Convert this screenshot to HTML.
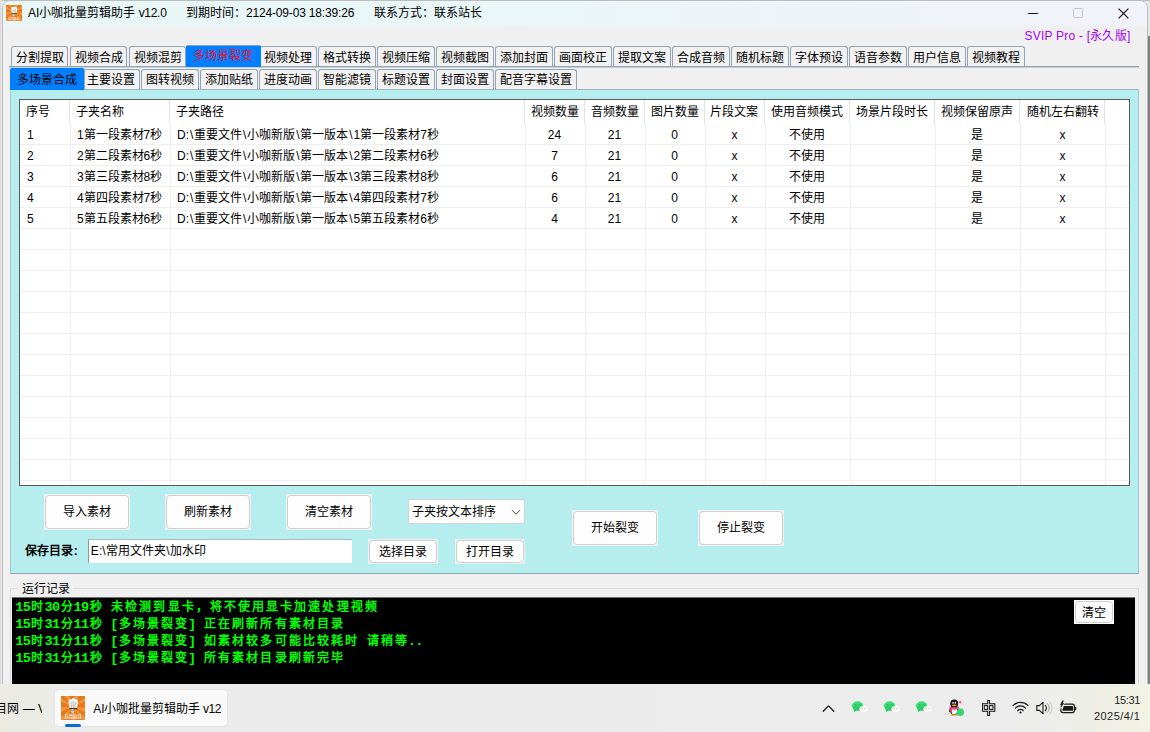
<!DOCTYPE html>
<html lang="zh-CN"><head><meta charset="utf-8"><title>AI小咖批量剪辑助手 v12.0</title>
<style>
*{box-sizing:border-box;margin:0;padding:0}
html,body{width:1150px;height:732px;overflow:hidden}
body{position:relative;background:#f0f0f0;font-family:"Liberation Sans",sans-serif;font-size:12px;color:#000;line-height:1}
.a{position:absolute;white-space:nowrap}
.t{position:absolute;white-space:nowrap;line-height:16px;height:16px}
.c{text-align:center}
.j{display:inline-block;text-align-last:justify;white-space:nowrap}
u{text-decoration:none;margin:0 0.9px}
#win{left:2px;top:0.4px;width:1146px;height:700px;border:1px solid #bdbdbd;border-radius:8px 8px 0 0;background:#f0f0f0;overflow:hidden}
#tb{left:0;top:0;width:1150px;height:25.3px;background:linear-gradient(90deg,#e8f6f6 0%,#eaf6f8 45%,#eef3f9 70%,#f0f3fa 100%)}
.tab{position:absolute;height:21px;border:1px solid #93a4b5;border-bottom:none;border-radius:3px 3px 0 0;background:#f2f2f2;text-align:center;line-height:22px;white-space:nowrap;overflow:hidden}
.tab.sel{background:#0080ff;border-color:#0080ff;border-radius:2px 2px 0 0}
.hl{position:absolute;height:1px;background:#93a4b5}
.vl{position:absolute;width:1px;background:#93a4b5}
#lv{left:19px;top:99px;width:1111px;height:387px;background:#fff;border:1px solid #5a5a5a;overflow:hidden}
.gh{position:absolute;left:0;width:1111px;height:1px;background:#efefef}
.gv{position:absolute;width:1px;background:#efefef;top:24px;height:363px}
.hs{position:absolute;width:1px;background:#e3e3e3;top:0;height:24px}
.btn{position:absolute;background:#eef1f1}
.btn>b{position:absolute;left:1px;top:1px;right:1px;bottom:1px;border:1px solid #d0d0d0;border-radius:4px;background:#fdfdfd;font-weight:normal;text-align:center;white-space:nowrap;display:block}
.con{position:absolute;left:16.4px;white-space:nowrap;color:#00ff00;font-weight:bold;font-size:12px;letter-spacing:2.08px;line-height:17px;height:17px;font-family:"Liberation Sans",sans-serif}
.con i{position:relative;left:-1.1px;font-style:normal;font-size:13.6px;letter-spacing:-0.65px;font-family:"Liberation Mono",monospace}
</style></head><body>
<div class="a" style="left:1147px;top:0;width:3px;height:36px;background:#e6e6e6"></div>
<div class="a" style="left:1148px;top:36px;width:2px;height:648px;background:#808080"></div>
<div class="a" style="left:0;top:0;width:1150px;height:1px;background:#bcbcbc"></div>
<div class="a" style="left:0;top:0;width:2.4px;height:684px;background:linear-gradient(90deg,#dadada,#e9e9e9)"></div>
<div id="win" class="a"></div>
<div class="a" style="left:3px;top:1.4px;width:1144px;height:24.4px;border-radius:7px 7px 0 0;overflow:hidden"><div id="tb" class="a"></div></div>
<svg class="a" style="left:6px;top:5px" width="16" height="16" viewBox="0 0 24 24"><rect width="24" height="24" fill="#e8791b"/>
<g fill="#f19b47" opacity="0.85"><path d="M12 11L0 1.5V5.5z"/><path d="M12 11L3.5 0H8z"/><path d="M12 11L13.5 0H18z"/><path d="M12 11L24 1.5V5.5z"/><path d="M12 11L24 11.5V16z"/><path d="M12 11L24 21V24H21z"/><path d="M12 11L10 24H14.5z"/><path d="M12 11L0 21V24H3z"/><path d="M12 11L0 11V15.5z"/></g>
<path d="M7.7 6.9C6.9 4.2 9 2.5 10.7 3.4C11.5 1.7 13.7 1.7 14.3 3.2C16.1 2.3 17.6 4.4 16.7 6.9L15.9 12.4H8.7z" fill="#fff"/>
<path d="M10 5.6L10.3 12M12.1 5L12.2 12M14.3 5.6L14 12" stroke="#8e8e8e" stroke-width="0.7" fill="none"/>
<rect x="8.4" y="12.2" width="7.8" height="1" fill="#1d1d1d"/>
<ellipse cx="11.7" cy="15" rx="1.9" ry="1.9" fill="#cdd2d6"/><path d="M10.6 14.4h0.9M12.3 14.4h0.9" stroke="#555" stroke-width="0.6"/>
<g fill="#fff" opacity="0.85"><rect x="4" y="18.4" width="3.3" height="4.6"/><rect x="8.2" y="18.4" width="3.3" height="4.6"/><rect x="12.4" y="18.4" width="3.3" height="4.6"/><rect x="16.6" y="18.4" width="3.3" height="4.6"/></g>
<path d="M4 20h3.3M5.6 18.4v4.6M8.2 20.6h3.3M9.8 19.4v3.6M12.4 19.8h3.3M14 20.8v2.2M16.6 20.2h3.3M18.2 18.4v4.6" stroke="#e8791b" stroke-width="0.7" fill="none"/></svg>
<div class="t" style="left:28px;top:5px"><span class="j" style="width:138.53px">AI小咖批量剪辑助手 <span style="letter-spacing:-0.3px">v12.0</span></span></div>
<div class="t" style="left:186px;top:5px"><span class="j" style="width:168.2px">到期时间：<span style="letter-spacing:-0.17px">2124-09-03 18:39:26</span></span></div>
<div class="t" style="left:374.4px;top:5px;letter-spacing:-0.1px"><span class="j" style="width:107.11px">联系方式：联系站长</span></div>
<div class="a" style="left:1028px;top:12.6px;width:10.3px;height:1.2px;background:#111"></div>
<div class="a" style="left:1073px;top:8px;width:10px;height:10px;border:1px solid #c3c7cc;border-radius:1.5px"></div>
<svg class="a" style="left:1118.3px;top:7.6px" width="11" height="11" viewBox="0 0 11 11"><path d="M0.6 0.6L10.4 10.4M10.4 0.6L0.6 10.4" stroke="#111" stroke-width="1.15" fill="none"/></svg>
<div class="t" style="left:1024.5px;top:27.5px;color:#a400ff;letter-spacing:0.22px"><span class="j" style="width:106px">SVIP Pro - [永久版]</span></div>
<div class="tab" style="left:10.9px;top:46px;width:57.5px"><span class="j" style="width:48px">分割提取</span></div>
<div class="tab" style="left:69.9px;top:46px;width:57.5px"><span class="j" style="width:48px">视频合成</span></div>
<div class="tab" style="left:128.9px;top:46px;width:57.5px"><span class="j" style="width:48px">视频混剪</span></div>
<div class="tab sel" style="left:185.7px;top:44.5px;width:75.4px;height:22.7px;line-height:21.6px;color:#e0143c;border-color:#86a0ba #0080ff #0080ff;z-index:3"><span class="j" style="width:60px">多场景裂变</span></div>
<div class="tab" style="left:259.2px;top:46px;width:57.5px"><span class="j" style="width:48px">视频处理</span></div>
<div class="tab" style="left:318.2px;top:46px;width:57.5px"><span class="j" style="width:48px">格式转换</span></div>
<div class="tab" style="left:377.2px;top:46px;width:57.5px"><span class="j" style="width:48px">视频压缩</span></div>
<div class="tab" style="left:436.2px;top:46px;width:57.5px"><span class="j" style="width:48px">视频截图</span></div>
<div class="tab" style="left:495.2px;top:46px;width:57.5px"><span class="j" style="width:48px">添加封面</span></div>
<div class="tab" style="left:554.2px;top:46px;width:57.5px"><span class="j" style="width:48px">画面校正</span></div>
<div class="tab" style="left:613.2px;top:46px;width:57.5px"><span class="j" style="width:48px">提取文案</span></div>
<div class="tab" style="left:672.2px;top:46px;width:57.5px"><span class="j" style="width:48px">合成音频</span></div>
<div class="tab" style="left:731.2px;top:46px;width:57.5px"><span class="j" style="width:48px">随机标题</span></div>
<div class="tab" style="left:790.2px;top:46px;width:57.5px"><span class="j" style="width:48px">字体预设</span></div>
<div class="tab" style="left:849.2px;top:46px;width:57.5px"><span class="j" style="width:48px">语音参数</span></div>
<div class="tab" style="left:908.2px;top:46px;width:57.5px"><span class="j" style="width:48px">用户信息</span></div>
<div class="tab" style="left:967.2px;top:46px;width:57.5px"><span class="j" style="width:48px">视频教程</span></div>
<div class="hl" style="left:9.2px;top:66px;width:1129.8px"></div>
<div class="hl" style="left:9.2px;top:67px;width:1129.8px;background:#c6ced6"></div>
<div class="tab sel" style="left:9.9px;top:67.8px;width:74.1px;height:22.5px;line-height:22px;z-index:3"><span class="j" style="width:60px">多场景合成</span></div>
<div class="tab" style="left:82.2px;top:69.2px;width:57.5px;line-height:20.5px"><span class="j" style="width:48px">主要设置</span></div>
<div class="tab" style="left:141.2px;top:69.2px;width:57.5px;line-height:20.5px"><span class="j" style="width:48px">图转视频</span></div>
<div class="tab" style="left:200.2px;top:69.2px;width:57.5px;line-height:20.5px"><span class="j" style="width:48px">添加贴纸</span></div>
<div class="tab" style="left:259.2px;top:69.2px;width:57.5px;line-height:20.5px"><span class="j" style="width:48px">进度动画</span></div>
<div class="tab" style="left:318.2px;top:69.2px;width:57.5px;line-height:20.5px"><span class="j" style="width:48px">智能滤镜</span></div>
<div class="tab" style="left:377.2px;top:69.2px;width:57.5px;line-height:20.5px"><span class="j" style="width:48px">标题设置</span></div>
<div class="tab" style="left:436.2px;top:69.2px;width:57.5px;line-height:20.5px"><span class="j" style="width:48px">封面设置</span></div>
<div class="tab" style="left:495.2px;top:69.2px;width:81.5px;line-height:20.5px"><span class="j" style="width:72px">配音字幕设置</span></div>
<div class="vl" style="left:84.2px;top:70px;height:19.5px;z-index:4"></div>
<div class="a" style="left:9.6px;top:89.3px;width:1129.2px;height:484.3px;background:#b6eeef;border:1px solid #93a4b5;border-left-color:#a3c6cd;border-right-color:#a3c6cd;border-top-color:#9fb3c0"></div>
<div id="lv" class="a">
<div class="gh" style="top:44.3px"></div>
<div class="gh" style="top:65.27px"></div>
<div class="gh" style="top:86.24px"></div>
<div class="gh" style="top:107.21px"></div>
<div class="gh" style="top:128.18px"></div>
<div class="gh" style="top:149.15px"></div>
<div class="gh" style="top:170.12px"></div>
<div class="gh" style="top:191.09px"></div>
<div class="gh" style="top:212.06px"></div>
<div class="gh" style="top:233.03px"></div>
<div class="gh" style="top:254px"></div>
<div class="gh" style="top:274.97px"></div>
<div class="gh" style="top:295.94px"></div>
<div class="gh" style="top:316.91px"></div>
<div class="gh" style="top:337.88px"></div>
<div class="gh" style="top:358.85px"></div>
<div class="gh" style="top:379.82px"></div>
<div class="hs" style="left:49px"></div>
<div class="gv" style="left:50px"></div>
<div class="hs" style="left:149px"></div>
<div class="gv" style="left:150px"></div>
<div class="hs" style="left:504px"></div>
<div class="gv" style="left:505px"></div>
<div class="hs" style="left:564px"></div>
<div class="gv" style="left:565px"></div>
<div class="hs" style="left:624px"></div>
<div class="gv" style="left:625px"></div>
<div class="hs" style="left:684px"></div>
<div class="gv" style="left:685px"></div>
<div class="hs" style="left:744px"></div>
<div class="gv" style="left:745px"></div>
<div class="hs" style="left:829px"></div>
<div class="gv" style="left:830px"></div>
<div class="hs" style="left:914px"></div>
<div class="gv" style="left:915px"></div>
<div class="hs" style="left:999px"></div>
<div class="gv" style="left:1000px"></div>
<div class="hs" style="left:1084px"></div>
<div class="gv" style="left:1085px"></div>
<div class="t" style="left:5.8px;top:4.1px"><span class="j" style="width:24px">序号</span></div>
<div class="t" style="left:56px;top:4.1px"><span class="j" style="width:48px">子夹名称</span></div>
<div class="t" style="left:156px;top:4.1px"><span class="j" style="width:48px">子夹路径</span></div>
<div class="t c" style="left:504.5px;top:4.1px;width:60px"><span class="j" style="width:48px">视频数量</span></div>
<div class="t c" style="left:564.5px;top:4.1px;width:60px"><span class="j" style="width:48px">音频数量</span></div>
<div class="t c" style="left:624.5px;top:4.1px;width:60px"><span class="j" style="width:48px">图片数量</span></div>
<div class="t c" style="left:684.5px;top:4.1px;width:59.9px"><span class="j" style="width:48px">片段文案</span></div>
<div class="t c" style="left:744.4px;top:4.1px;width:85.2px"><span class="j" style="width:72px">使用音频模式</span></div>
<div class="t c" style="left:829.6px;top:4.1px;width:85.2px"><span class="j" style="width:72px">场景片段时长</span></div>
<div class="t c" style="left:914.8px;top:4.1px;width:85.2px"><span class="j" style="width:72px">视频保留原声</span></div>
<div class="t c" style="left:1000px;top:4.1px;width:85px"><span class="j" style="width:72px">随机左右翻转</span></div>
<div class="t" style="left:7px;top:26.9px">1</div>
<div class="t" style="left:56.9px;top:26.9px"><span class="j" style="width:85.36px">1第一段素材7秒</span></div>
<div class="t" style="left:157px;top:26.9px"><span class="j" style="width:261.86px">D:<u>\</u>重要文件<u>\</u>小咖新版<u>\</u>第一版本<u>\</u>1第一段素材7秒</span></div>
<div class="t c" style="left:504.5px;top:26.9px;width:60px">24</div>
<div class="t c" style="left:564.5px;top:26.9px;width:60px">21</div>
<div class="t c" style="left:624.5px;top:26.9px;width:60px">0</div>
<div class="t c" style="left:684.5px;top:26.9px;width:59.9px">x</div>
<div class="t c" style="left:744.4px;top:26.9px;width:85.2px"><span class="j" style="width:36px">不使用</span></div>
<div class="t c" style="left:914.8px;top:26.9px;width:85.2px">是</div>
<div class="t c" style="left:1000px;top:26.9px;width:85px">x</div>
<div class="t" style="left:7px;top:47.88px">2</div>
<div class="t" style="left:56.9px;top:47.88px"><span class="j" style="width:85.36px">2第二段素材6秒</span></div>
<div class="t" style="left:157px;top:47.88px"><span class="j" style="width:261.86px">D:<u>\</u>重要文件<u>\</u>小咖新版<u>\</u>第一版本<u>\</u>2第二段素材6秒</span></div>
<div class="t c" style="left:504.5px;top:47.88px;width:60px">7</div>
<div class="t c" style="left:564.5px;top:47.88px;width:60px">21</div>
<div class="t c" style="left:624.5px;top:47.88px;width:60px">0</div>
<div class="t c" style="left:684.5px;top:47.88px;width:59.9px">x</div>
<div class="t c" style="left:744.4px;top:47.88px;width:85.2px"><span class="j" style="width:36px">不使用</span></div>
<div class="t c" style="left:914.8px;top:47.88px;width:85.2px">是</div>
<div class="t c" style="left:1000px;top:47.88px;width:85px">x</div>
<div class="t" style="left:7px;top:68.86px">3</div>
<div class="t" style="left:56.9px;top:68.86px"><span class="j" style="width:85.36px">3第三段素材8秒</span></div>
<div class="t" style="left:157px;top:68.86px"><span class="j" style="width:261.86px">D:<u>\</u>重要文件<u>\</u>小咖新版<u>\</u>第一版本<u>\</u>3第三段素材8秒</span></div>
<div class="t c" style="left:504.5px;top:68.86px;width:60px">6</div>
<div class="t c" style="left:564.5px;top:68.86px;width:60px">21</div>
<div class="t c" style="left:624.5px;top:68.86px;width:60px">0</div>
<div class="t c" style="left:684.5px;top:68.86px;width:59.9px">x</div>
<div class="t c" style="left:744.4px;top:68.86px;width:85.2px"><span class="j" style="width:36px">不使用</span></div>
<div class="t c" style="left:914.8px;top:68.86px;width:85.2px">是</div>
<div class="t c" style="left:1000px;top:68.86px;width:85px">x</div>
<div class="t" style="left:7px;top:89.84px">4</div>
<div class="t" style="left:56.9px;top:89.84px"><span class="j" style="width:85.36px">4第四段素材7秒</span></div>
<div class="t" style="left:157px;top:89.84px"><span class="j" style="width:261.86px">D:<u>\</u>重要文件<u>\</u>小咖新版<u>\</u>第一版本<u>\</u>4第四段素材7秒</span></div>
<div class="t c" style="left:504.5px;top:89.84px;width:60px">6</div>
<div class="t c" style="left:564.5px;top:89.84px;width:60px">21</div>
<div class="t c" style="left:624.5px;top:89.84px;width:60px">0</div>
<div class="t c" style="left:684.5px;top:89.84px;width:59.9px">x</div>
<div class="t c" style="left:744.4px;top:89.84px;width:85.2px"><span class="j" style="width:36px">不使用</span></div>
<div class="t c" style="left:914.8px;top:89.84px;width:85.2px">是</div>
<div class="t c" style="left:1000px;top:89.84px;width:85px">x</div>
<div class="t" style="left:7px;top:110.82px">5</div>
<div class="t" style="left:56.9px;top:110.82px"><span class="j" style="width:85.36px">5第五段素材6秒</span></div>
<div class="t" style="left:157px;top:110.82px"><span class="j" style="width:261.86px">D:<u>\</u>重要文件<u>\</u>小咖新版<u>\</u>第一版本<u>\</u>5第五段素材6秒</span></div>
<div class="t c" style="left:504.5px;top:110.82px;width:60px">4</div>
<div class="t c" style="left:564.5px;top:110.82px;width:60px">21</div>
<div class="t c" style="left:624.5px;top:110.82px;width:60px">0</div>
<div class="t c" style="left:684.5px;top:110.82px;width:59.9px">x</div>
<div class="t c" style="left:744.4px;top:110.82px;width:85.2px"><span class="j" style="width:36px">不使用</span></div>
<div class="t c" style="left:914.8px;top:110.82px;width:85.2px">是</div>
<div class="t c" style="left:1000px;top:110.82px;width:85px">x</div>
</div>
<div class="btn" style="left:44px;top:494px;width:86px;height:36px"><b style="line-height:32px"><span class="j" style="width:48px">导入素材</span></b></div>
<div class="btn" style="left:165px;top:494px;width:86px;height:36px"><b style="line-height:32px"><span class="j" style="width:48px">刷新素材</span></b></div>
<div class="btn" style="left:286px;top:494px;width:86px;height:36px"><b style="line-height:32px"><span class="j" style="width:48px">清空素材</span></b></div>
<div class="btn" style="left:572px;top:509.8px;width:86px;height:36px"><b style="line-height:32px"><span class="j" style="width:48px">开始裂变</span></b></div>
<div class="btn" style="left:698px;top:509.8px;width:86px;height:36px"><b style="line-height:32px"><span class="j" style="width:48px">停止裂变</span></b></div>
<div class="btn" style="left:367.8px;top:538.8px;width:70px;height:25px"><b style="line-height:23.4px"><span class="j" style="width:48px">选择目录</span></b></div>
<div class="btn" style="left:454.8px;top:538.8px;width:70px;height:25px"><b style="line-height:23.4px"><span class="j" style="width:48px">打开目录</span></b></div>
<div class="a" style="left:408.2px;top:499px;width:116.5px;height:24.7px;background:#fff;border:1px solid #d2d2d2;border-radius:2px"></div>
<div class="t" style="left:412px;top:503.5px"><span class="j" style="width:84px">子夹按文本排序</span></div>
<svg class="a" style="left:510.8px;top:508.5px" width="10" height="7" viewBox="0 0 10 7"><path d="M1 1.2L5 5.2L9 1.2" stroke="#444" stroke-width="1" fill="none"/></svg>
<div class="t" style="left:24.7px;top:543.2px;font-weight:bold;letter-spacing:0.25px"><span class="j" style="width:53.25px">保存目录:</span></div>
<div class="a" style="left:88.2px;top:539.3px;width:264px;height:23.3px;background:#fff;border-left:1px solid #8b9aa0;border-top:1px solid #a9bcc0"></div>
<div class="t" style="left:90.8px;top:543px;letter-spacing:0.1px"><span class="j" style="width:115.22px">E:\常用文件夹\加水印</span></div>
<div class="a" style="left:9.6px;top:588.2px;width:1129.2px;height:100px;border:1px solid #dcdcdc;border-bottom:none"></div>
<div class="t" style="left:19px;top:581.3px;background:#f0f0f0;padding:0 3px"><span class="j" style="width:48px">运行记录</span></div>
<div class="a" style="left:12.4px;top:597px;width:1122.7px;height:90px;background:#000;border-top:1px solid #6f6f6f"></div>
<div class="con" style="top:598.8px"><span class="j" style="width:362.38px"><i>15</i>时<i>30</i>分<i>19</i>秒<i> </i>未检测到显卡，将不使用显卡加速处理视频</span></div>
<div class="con" style="top:615.8px"><span class="j" style="width:328.58px"><i>15</i>时<i>31</i>分<i>11</i>秒<i> [</i>多场景裂变<i>] </i>正在刷新所有素材目录</span></div>
<div class="con" style="top:632.8px"><span class="j" style="width:407.44px"><i>15</i>时<i>31</i>分<i>11</i>秒<i> [</i>多场景裂变<i>] </i>如素材较多可能比较耗时<i> </i>请稍等<i>..</i></span></div>
<div class="con" style="top:649.8px"><span class="j" style="width:328.58px"><i>15</i>时<i>31</i>分<i>11</i>秒<i> [</i>多场景裂变<i>] </i>所有素材目录刷新完毕</span></div>
<div class="btn" style="left:1074px;top:600.2px;width:40.2px;height:23.6px;background:#fff"><b style="line-height:23px"><span class="j" style="width:24px">清空</span></b></div>
<div class="a" style="left:0;top:683.8px;width:1150px;height:48.2px;background:linear-gradient(90deg,#ebebe4 0%,#ebebe8 6%,#ebebeb 15%,#ececec 88%,#eeeee8 95%,#f2f3e2 100%)"></div>
<div class="a" style="left:53.7px;top:689px;width:174.6px;height:38.4px;background:#f9f9f9;border:1px solid #e4e4e4;border-radius:5px"></div>
<svg class="a" style="left:61px;top:696px" width="24" height="24" viewBox="0 0 24 24"><rect width="24" height="24" fill="#e8791b"/>
<g fill="#f19b47" opacity="0.85"><path d="M12 11L0 1.5V5.5z"/><path d="M12 11L3.5 0H8z"/><path d="M12 11L13.5 0H18z"/><path d="M12 11L24 1.5V5.5z"/><path d="M12 11L24 11.5V16z"/><path d="M12 11L24 21V24H21z"/><path d="M12 11L10 24H14.5z"/><path d="M12 11L0 21V24H3z"/><path d="M12 11L0 11V15.5z"/></g>
<path d="M7.7 6.9C6.9 4.2 9 2.5 10.7 3.4C11.5 1.7 13.7 1.7 14.3 3.2C16.1 2.3 17.6 4.4 16.7 6.9L15.9 12.4H8.7z" fill="#fff"/>
<path d="M10 5.6L10.3 12M12.1 5L12.2 12M14.3 5.6L14 12" stroke="#8e8e8e" stroke-width="0.7" fill="none"/>
<rect x="8.4" y="12.2" width="7.8" height="1" fill="#1d1d1d"/>
<ellipse cx="11.7" cy="15" rx="1.9" ry="1.9" fill="#cdd2d6"/><path d="M10.6 14.4h0.9M12.3 14.4h0.9" stroke="#555" stroke-width="0.6"/>
<g fill="#fff" opacity="0.85"><rect x="4" y="18.4" width="3.3" height="4.6"/><rect x="8.2" y="18.4" width="3.3" height="4.6"/><rect x="12.4" y="18.4" width="3.3" height="4.6"/><rect x="16.6" y="18.4" width="3.3" height="4.6"/></g>
<path d="M4 20h3.3M5.6 18.4v4.6M8.2 20.6h3.3M9.8 19.4v3.6M12.4 19.8h3.3M14 20.8v2.2M16.6 20.2h3.3M18.2 18.4v4.6" stroke="#e8791b" stroke-width="0.7" fill="none"/></svg>
<div class="t" style="left:93.3px;top:701.2px;letter-spacing:-0.1px"><span class="j" style="width:127.73px">AI小咖批量剪辑助手 <span style="letter-spacing:-0.4px">v12</span></span></div>
<div class="a" style="left:65px;top:723.8px;width:16.2px;height:3.4px;border-radius:2px;background:#0a6cd6"></div>
<div class="a" style="left:0;top:701.2px;width:41.6px;height:16px;overflow:hidden"><div class="t" style="left:-4.7px;top:0">目网 — V</div></div>
<svg class="a" style="left:821.5px;top:703.5px" width="13" height="9" viewBox="0 0 13 9"><path d="M1.2 7.2L6.5 1.9L11.8 7.2" stroke="#1a1a1a" stroke-width="1.3" fill="none" stroke-linecap="round" stroke-linejoin="round"/></svg>
<svg width="0" height="0" style="position:absolute"><defs><linearGradient id="wg" x1="0" y1="0" x2="0" y2="1"><stop offset="0" stop-color="#45e381"/><stop offset="1" stop-color="#1fc25c"/></linearGradient></defs></svg>
<svg class="a" style="left:851.8px;top:700.6px" width="17" height="12" viewBox="0 0 17 12">
<path d="M5.7 0.2C2.6 0.2 0.1 2.3 0.1 5c0 1.5 0.8 2.8 2 3.7L1.8 11.2L4.3 9.6c0.5 0.1 0.9 0.2 1.4 0.2c3.1 0 5.6-2.1 5.6-4.8S8.8 0.2 5.7 0.2z" fill="url(#wg)"/>
<ellipse cx="3.9" cy="3.6" rx="0.9" ry="0.55" fill="#1ea850"/><ellipse cx="7.4" cy="3.6" rx="0.9" ry="0.55" fill="#1ea850"/>
<path d="M11.7 5c-2.5 0-4.5 1.4-4.5 3.1s2 3.1 4.5 3.1c0.5 0 0.9-0.1 1.3-0.2l1.6 0.8l-0.4-1.3c1.1-0.6 1.9-1.5 1.9-2.4c0-1.7-2-3.1-4.4-3.1z" fill="#f8f8f8"/>
<circle cx="10.3" cy="7.6" r="0.6" fill="#bdbdbd"/><circle cx="13.1" cy="7.6" r="0.6" fill="#bdbdbd"/>
</svg>
<svg class="a" style="left:883.7px;top:700.6px" width="17" height="12" viewBox="0 0 17 12">
<path d="M5.7 0.2C2.6 0.2 0.1 2.3 0.1 5c0 1.5 0.8 2.8 2 3.7L1.8 11.2L4.3 9.6c0.5 0.1 0.9 0.2 1.4 0.2c3.1 0 5.6-2.1 5.6-4.8S8.8 0.2 5.7 0.2z" fill="url(#wg)"/>
<ellipse cx="3.9" cy="3.6" rx="0.9" ry="0.55" fill="#1ea850"/><ellipse cx="7.4" cy="3.6" rx="0.9" ry="0.55" fill="#1ea850"/>
<path d="M11.7 5c-2.5 0-4.5 1.4-4.5 3.1s2 3.1 4.5 3.1c0.5 0 0.9-0.1 1.3-0.2l1.6 0.8l-0.4-1.3c1.1-0.6 1.9-1.5 1.9-2.4c0-1.7-2-3.1-4.4-3.1z" fill="#f8f8f8"/>
<circle cx="10.3" cy="7.6" r="0.6" fill="#bdbdbd"/><circle cx="13.1" cy="7.6" r="0.6" fill="#bdbdbd"/>
</svg>
<svg class="a" style="left:915.7px;top:700.6px" width="17" height="12" viewBox="0 0 17 12">
<path d="M5.7 0.2C2.6 0.2 0.1 2.3 0.1 5c0 1.5 0.8 2.8 2 3.7L1.8 11.2L4.3 9.6c0.5 0.1 0.9 0.2 1.4 0.2c3.1 0 5.6-2.1 5.6-4.8S8.8 0.2 5.7 0.2z" fill="url(#wg)"/>
<ellipse cx="3.9" cy="3.6" rx="0.9" ry="0.55" fill="#1ea850"/><ellipse cx="7.4" cy="3.6" rx="0.9" ry="0.55" fill="#1ea850"/>
<path d="M11.7 5c-2.5 0-4.5 1.4-4.5 3.1s2 3.1 4.5 3.1c0.5 0 0.9-0.1 1.3-0.2l1.6 0.8l-0.4-1.3c1.1-0.6 1.9-1.5 1.9-2.4c0-1.7-2-3.1-4.4-3.1z" fill="#f8f8f8"/>
<circle cx="10.3" cy="7.6" r="0.6" fill="#bdbdbd"/><circle cx="13.1" cy="7.6" r="0.6" fill="#bdbdbd"/>
</svg>
<svg class="a" style="left:948px;top:699px" width="18" height="18" viewBox="0 0 18 18">
<ellipse cx="4.3" cy="16" rx="2.1" ry="0.85" fill="#f7a51c"/><ellipse cx="8.2" cy="16" rx="2.1" ry="0.85" fill="#f7a51c"/>
<path d="M1.5 13.5c-0.9-1-0.3-3.5 1.1-4.7l1 1.4z" fill="#111"/>
<ellipse cx="6.2" cy="11.2" rx="4.3" ry="4.8" fill="#111"/>
<ellipse cx="6.2" cy="4.7" rx="3.9" ry="4.1" fill="#111"/>
<ellipse cx="6.3" cy="12" rx="2.8" ry="3.5" fill="#fff"/>
<ellipse cx="5.1" cy="3.9" rx="0.8" ry="1.1" fill="#fff"/><ellipse cx="7.4" cy="3.9" rx="0.8" ry="1.1" fill="#fff"/>
<circle cx="5.3" cy="4.1" r="0.4" fill="#111"/><circle cx="7.2" cy="4.1" r="0.4" fill="#111"/>
<ellipse cx="6.3" cy="6.3" rx="2.4" ry="0.85" fill="#f7a51c"/>
<path d="M1.7 7.6c2.8 1.3 6.2 1.3 9 0l0.5 2c-3.1 1.5-6.9 1.5-10 0z" fill="#ff3d7f"/>
<path d="M2.3 9.8l2 0.6l-0.5 2.6l-2-0.7z" fill="#ff3d7f"/>
<path d="M9.8 3.2l3.3-1.7l0.2 3.3z" fill="#ff4f8f"/>
<circle cx="12.3" cy="13.3" r="3.7" fill="#2fd572"/>
</svg>
<svg class="a" style="left:982px;top:700px" width="14" height="16" viewBox="0 0 14 16">
<g fill="none" stroke="#111" stroke-width="2.9"><rect x="1.3" y="4.7" width="10.6" height="5.6"/><path d="M6.6 0V16"/></g>
<g fill="none" stroke="#ececec" stroke-width="0.85"><rect x="1.3" y="4.7" width="10.6" height="5.6"/><path d="M6.6 0.85V15.15"/></g>
</svg>
<svg class="a" style="left:1011.5px;top:701px" width="17" height="13" viewBox="0 0 17 13">
<g fill="none" stroke="#1a1a1a" stroke-width="1.25" stroke-linecap="round"><path d="M1 4.6a10.6 10.6 0 0 1 15 0"/><path d="M3.4 7.1a7.2 7.2 0 0 1 10.2 0"/><path d="M5.8 9.5a3.8 3.8 0 0 1 5.4 0"/></g>
<circle cx="8.5" cy="11.5" r="1.1" fill="#1a1a1a"/></svg>
<svg class="a" style="left:1035.5px;top:701px" width="17" height="14" viewBox="0 0 17 14">
<path d="M0.8 4.6h2.6l3.6-3.3v11.4l-3.6-3.3h-2.6z" fill="none" stroke="#1a1a1a" stroke-width="1.1" stroke-linejoin="round"/>
<path d="M9.3 4.3a3.8 3.8 0 0 1 0 5.4" fill="none" stroke="#1a1a1a" stroke-width="1.1" stroke-linecap="round"/>
<path d="M11.5 2.6a6.3 6.3 0 0 1 0 8.8" fill="none" stroke="#9a9a9a" stroke-width="1" stroke-linecap="round"/>
<path d="M13.7 1a8.7 8.7 0 0 1 0 12" fill="none" stroke="#c4c4c4" stroke-width="1" stroke-linecap="round"/></svg>
<svg class="a" style="left:1059px;top:699.5px" width="19" height="15" viewBox="0 0 19 15">
<rect x="1.8" y="4.2" width="13.6" height="8.4" rx="2" fill="none" stroke="#1a1a1a" stroke-width="1.2"/>
<path d="M4.8 6h8.6a0.6 0.6 0 0 1 0.6 0.6v3.6a0.6 0.6 0 0 1 -0.6 0.6h-9.6a0.6 0.6 0 0 1 -0.5 -0.8z" fill="#1a1a1a"/>
<path d="M16 6.9h0.6a0.7 0.7 0 0 1 0.7 0.7v1.6a0.7 0.7 0 0 1 -0.7 0.7h-0.6z" fill="#1a1a1a"/>
<path d="M3.2 0.5H4.8L3.8 3.2H5.1L1.7 8L2.5 4.9H1.2z" fill="#1a1a1a" stroke="#ececec" stroke-width="1.3" paint-order="stroke" stroke-linejoin="round"/>
</svg>
<div class="t" style="left:1080px;top:691.7px;width:60px;text-align:right;font-size:11px;letter-spacing:-0.35px;color:#1c1c1c">15:31</div>
<div class="t" style="left:1080.4px;top:707.8px;width:60px;text-align:right;font-size:11px;letter-spacing:0.45px;color:#1c1c1c">2025/4/1</div>
</body></html>
